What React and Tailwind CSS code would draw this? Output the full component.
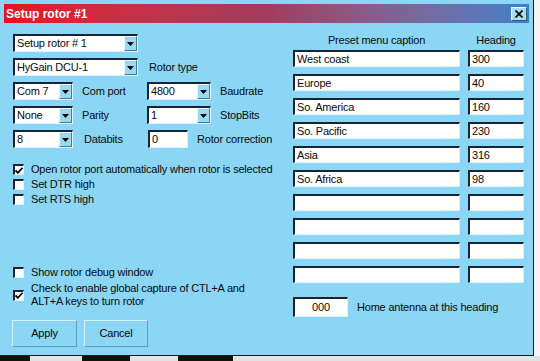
import React from "react";

const sunken =
  "bg-white border-t-2 border-l-2 border-b border-r border-t-[#1c2230] border-l-[#1c2230] border-b-[#dff3fb] border-r-[#dff3fb]";

function Arrow() {
  return (
    <svg width="7" height="4" viewBox="0 0 7 4">
      <path d="M0 0H7L3.5 4Z" fill="#000" />
    </svg>
  );
}

function Combo({ w, value }) {
  return (
    <div className={`flex h-[18px] ${w} ${sunken}`}>
      <span className="flex-1 pl-[2px] leading-[15px] whitespace-nowrap overflow-hidden">{value}</span>
      <span className="w-[13px] h-full flex items-center justify-center bg-[#9bd9f1] border-t border-l border-b border-r border-t-[#e6f7fd] border-l-[#e6f7fd] border-b-[#3e7f9b] border-r-[#3e7f9b]">
        <Arrow />
      </span>
    </div>
  );
}

function Check({ checked }) {
  return (
    <span className={`w-[11px] h-[11px] shrink-0 flex items-center justify-center ${sunken}`}>
      {checked && (
        <svg width="8" height="7" viewBox="0 0 8 7">
          <path d="M0.5 3.5L2.8 5.8L7.5 0.8" stroke="#000" strokeWidth="1.8" fill="none" />
        </svg>
      )}
    </span>
  );
}

function Btn({ w, children }) {
  return (
    <div className={`h-[27px] ${w} flex items-center justify-center bg-[#8ad6f4] border border-t-[#d4f1fc] border-l-[#d4f1fc] border-b-[#5d9fbc] border-r-[#5d9fbc]`}>
      {children}
    </div>
  );
}

const presets = [
  ["West coast", "300"],
  ["Europe", "40"],
  ["So. America", "160"],
  ["So. Pacific", "230"],
  ["Asia", "316"],
  ["So. Africa", "98"],
  ["", ""],
  ["", ""],
  ["", ""],
  ["", ""],
];

export default function App() {
  return (
    <div
      className="w-[540px] h-[361px] overflow-hidden bg-[#e9eef0] flex flex-col text-[11px] tracking-[-0.2px] text-[#0a0a0a]"
      style={{ fontFamily: '"Liberation Sans", Arial, sans-serif' }}
    >
      <div className="flex">
        <div className="w-[534px] h-[356px] bg-[#8ad6f4] border-r border-b border-[#1a1a1a] flex flex-col">
          {/* title bar */}
          <div className="mt-[4px] mx-[4px] h-[19px] flex items-center justify-between bg-gradient-to-r from-[#e8101c] via-[#a23a5e] to-[#3a80cc]">
            <span className="pl-[2px] text-white font-bold text-[12px] tracking-normal">Setup rotor #1</span>
            <span className="mr-[2px] w-[16px] h-[14px] flex items-center justify-center bg-[#a9def2] border border-t-[#eaf8fd] border-l-[#eaf8fd] border-b-[#2b5f78] border-r-[#2b5f78]">
              <svg width="8" height="8" viewBox="0 0 8 8">
                <path d="M0.5 0.5L7.5 7.5M7.5 0.5L0.5 7.5" stroke="#000" strokeWidth="1.8" />
              </svg>
            </span>
          </div>

          <div className="flex flex-1">
            {/* left column */}
            <div className="w-[280px] pl-[13px] flex flex-col">
              <div className="mt-[11px] flex flex-col gap-[6px]">
                <Combo w="w-[125px]" value="Setup rotor # 1" />
                <div className="flex items-center">
                  <Combo w="w-[125px]" value="HyGain DCU-1" />
                  <span className="pl-[11px]">Rotor type</span>
                </div>
                <div className="flex items-center">
                  <Combo w="w-[60px]" value="Com 7" />
                  <span className="w-[74px] pl-[9px]">Com port</span>
                  <Combo w="w-[64px]" value="4800" />
                  <span className="pl-[9px]">Baudrate</span>
                </div>
                <div className="flex items-center">
                  <Combo w="w-[60px]" value="None" />
                  <span className="w-[74px] pl-[9px]">Parity</span>
                  <Combo w="w-[64px]" value="1" />
                  <span className="pl-[9px]">StopBits</span>
                </div>
                <div className="flex items-center">
                  <Combo w="w-[60px]" value="8" />
                  <span className="w-[75px] pl-[11px]">Databits</span>
                  <div className={`h-[18px] w-[40px] pl-[2px] leading-[15px] ${sunken}`}>0</div>
                  <span className="pl-[9px]">Rotor correction</span>
                </div>
              </div>

              <div className="mt-[14px] flex flex-col">
                <div className="h-[15px] flex items-center gap-[7px]">
                  <Check checked />
                  <span>Open rotor port automatically when rotor is selected</span>
                </div>
                <div className="h-[15px] flex items-center gap-[7px]">
                  <Check />
                  <span>Set DTR high</span>
                </div>
                <div className="h-[15px] flex items-center gap-[7px]">
                  <Check />
                  <span>Set RTS high</span>
                </div>
              </div>

              <div className="mt-[58px] h-[15px] flex items-center gap-[7px]">
                <Check />
                <span>Show rotor debug window</span>
              </div>
              <div className="mt-[2px] flex items-center gap-[7px]">
                <Check checked />
                <span className="leading-[13px]">
                  Check to enable global capture of CTL+A and
                  <br />
                  ALT+A keys to turn rotor
                </span>
              </div>

              <div className="mt-[12px] -ml-[1px] flex gap-[7px]">
                <Btn w="w-[65px]">Apply</Btn>
                <Btn w="w-[64px]">Cancel</Btn>
              </div>
            </div>

            {/* right column */}
            <div className="pl-[13px] flex flex-col">
              <div className="mt-[10px] h-[14px] flex leading-[14px]">
                <span className="w-[167px] text-center">Preset menu caption</span>
                <span className="ml-[8px] w-[56px] text-center">Heading</span>
              </div>
              <div className="mt-[3px] flex flex-col gap-[7px]">
                {presets.map(([name, hdg], i) => (
                  <div key={i} className="flex gap-[8px]">
                    <div className={`w-[167px] h-[17px] pl-[2px] leading-[14px] ${sunken}`}>{name}</div>
                    <div className={`w-[56px] h-[17px] pl-[2px] leading-[14px] ${sunken}`}>{hdg}</div>
                  </div>
                ))}
              </div>
              <div className="mt-[14px] flex items-center">
                <div className={`w-[55px] h-[20px] text-center leading-[17px] ${sunken}`}>000</div>
                <span className="pl-[9px]">Home antenna at this heading</span>
              </div>
            </div>
          </div>
        </div>
        <div className="flex-1 bg-[#f2f4f5]" />
      </div>
      <div className="flex-1 flex bg-[#dfe3e5]">
        <div className="w-[30px] bg-[#111]" />
        <div className="w-[52px]" />
        <div className="w-[48px] bg-[#111]" />
        <div className="w-[48px]" />
        <div className="w-[55px] bg-[#111]" />
      </div>
    </div>
  );
}
